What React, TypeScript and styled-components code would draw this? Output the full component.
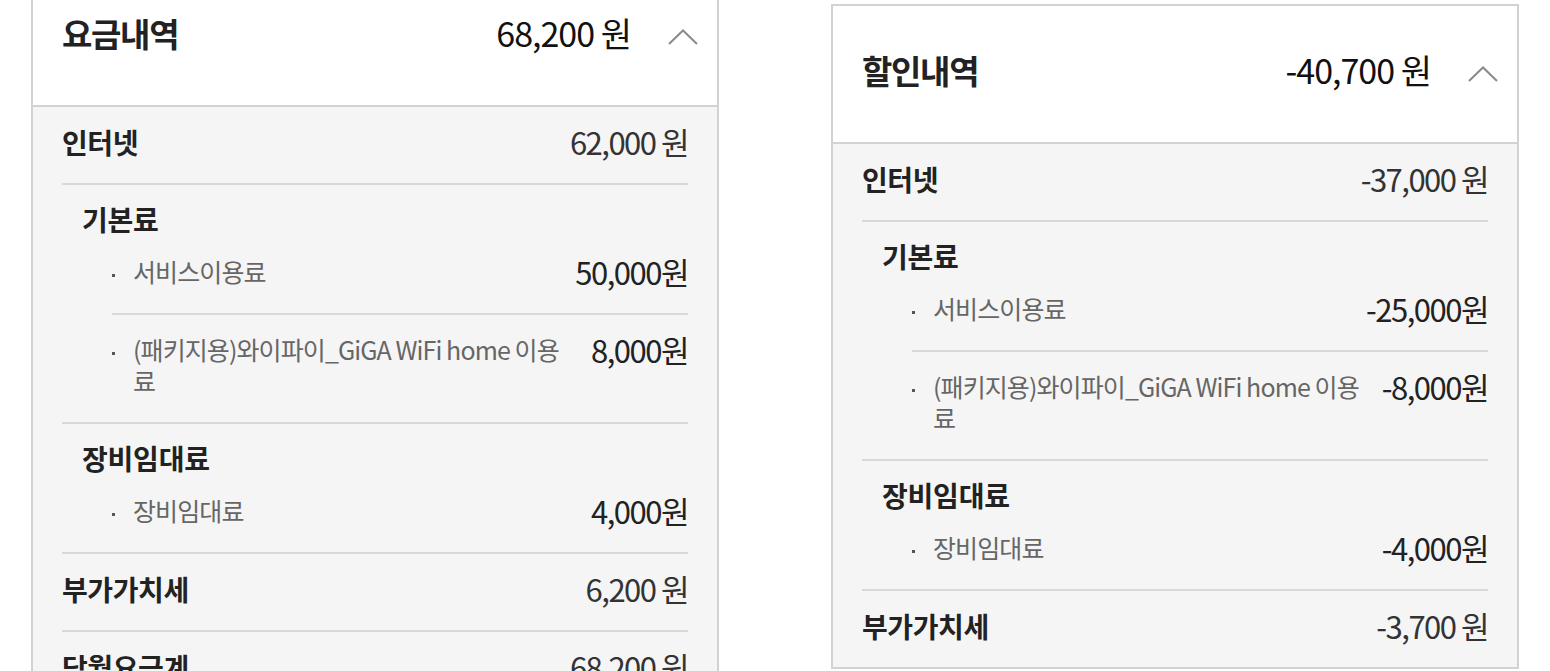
import styled, { createGlobalStyle } from 'styled-components'

let GlobalStyle = createGlobalStyle`
    html, body {
        margin: 0;
        background: #fff;
        font-family: "Noto Sans CJK KR", "Noto Sans", sans-serif;
    }
`

type Item = { label: string; amount: string }
type Entry =
    | { kind: 'row'; title: string; amount: string }
    | { kind: 'group'; title: string; items: Item[] }

type Bill = { title: string; total: string; offset: number; entries: Entry[] }

const bills: Bill[] = [
    {
        title: '요금내역',
        total: '68,200 원',
        offset: -33,
        entries: [
            { kind: 'row', title: '인터넷', amount: '62,000 원' },
            {
                kind: 'group', title: '기본료', items: [
                    { label: '서비스이용료', amount: '50,000원' },
                    { label: '(패키지용)와이파이_GiGA WiFi home 이용료', amount: '8,000원' },
                ]
            },
            { kind: 'group', title: '장비임대료', items: [{ label: '장비임대료', amount: '4,000원' }] },
            { kind: 'row', title: '부가가치세', amount: '6,200 원' },
            { kind: 'row', title: '당월요금계', amount: '68,200 원' },
        ],
    },
    {
        title: '할인내역',
        total: '-40,700 원',
        offset: 4,
        entries: [
            { kind: 'row', title: '인터넷', amount: '-37,000 원' },
            {
                kind: 'group', title: '기본료', items: [
                    { label: '서비스이용료', amount: '-25,000원' },
                    { label: '(패키지용)와이파이_GiGA WiFi home 이용료', amount: '-8,000원' },
                ]
            },
            { kind: 'group', title: '장비임대료', items: [{ label: '장비임대료', amount: '-4,000원' }] },
            { kind: 'row', title: '부가가치세', amount: '-3,700 원' },
        ],
    },
]

let Page = styled.div`
    display: flex;
    align-items: flex-start;
    gap: 112px;
    padding-left: 31px;
    height: 671px;
    overflow: hidden;
`
let Panel = styled.section<{ $offset: number }>`
    flex-shrink: 0;
    width: 688px;
    box-sizing: border-box;
    margin-top: ${p => p.$offset}px;
    border: 2px solid #d2d2d2;
    background: #f5f5f5;
`
let Header = styled.div`
    display: flex;
    align-items: flex-start;
    padding: 44px 19px 52px 29px;
    background: #fff;
    border-bottom: 2px solid #d2d2d2;
`
let HeaderTitle = styled.h2`
    flex: 1;
    margin: 0;
    font-size: 33px;
    font-weight: 700;
    line-height: 40px;
    letter-spacing: -1.3px;
    color: #222;
`
let HeaderAmount = styled.span`
    font-size: 34px;
    line-height: 40px;
    letter-spacing: -1px;
    color: #111;
`
let Toggle = styled.button`
    display: flex;
    margin: 16px 0 0 37px;
    padding: 0;
    border: 0;
    background: none;
`
let Body = styled.div`
    padding: 0 29px;
`
let Row = styled.div`
    display: flex;
    justify-content: space-between;
    align-items: center;
    padding: 17px 0 23px;
    border-bottom: 2px solid #d8d8d8;
    &:last-child {
        border-bottom: none;
    }
`
let RowTitle = styled.span`
    font-size: 28px;
    font-weight: 700;
    line-height: 36px;
    letter-spacing: -0.4px;
    color: #222;
`
let RowAmount = styled.span`
    font-size: 31px;
    line-height: 36px;
    letter-spacing: -1.5px;
    color: #333;
`
let Group = styled.div`
    border-bottom: 2px solid #d8d8d8;
    &:last-child {
        border-bottom: none;
    }
`
let GroupTitle = styled.div`
    padding: 16px 0 0 20px;
    font-size: 28px;
    font-weight: 700;
    line-height: 36px;
    letter-spacing: -0.2px;
    color: #222;
`
let ItemList = styled.ul`
    list-style: none;
    margin: 0 0 0 50px;
    padding: 0;
`
let ItemRow = styled.li`
    display: flex;
    justify-content: space-between;
    align-items: flex-start;
    padding: 19px 0 26px;
    border-bottom: 2px solid #d8d8d8;
    &:last-child {
        border-bottom: none;
    }
`
let ItemLabel = styled.div`
    display: flex;
    align-items: flex-start;
`
let Bullet = styled.i`
    flex-shrink: 0;
    width: 3px;
    height: 3px;
    margin: 18px 18px 0 0;
    background: #555;
`
let ItemText = styled.span`
    max-width: 440px;
    font-size: 25px;
    line-height: 31px;
    letter-spacing: -0.9px;
    color: #666;
`
let ItemAmount = styled.span`
    white-space: nowrap;
    font-size: 31px;
    line-height: 31px;
    letter-spacing: -1.5px;
    color: #222;
`

function Chevron() {
    return (
        <svg width="30" height="16" viewBox="0 0 30 16" fill="none">
            <path d="M1 15 L15 1.5 L29 15" stroke="#8a8a8a" strokeWidth="2" />
        </svg>
    )
}

function BillPanel({ bill }: { bill: Bill }) {
    return (
        <Panel $offset={bill.offset}>
            <Header>
                <HeaderTitle>{bill.title}</HeaderTitle>
                <HeaderAmount>{bill.total}</HeaderAmount>
                <Toggle aria-label="접기"><Chevron /></Toggle>
            </Header>
            <Body>
                {bill.entries.map((e, i) =>
                    e.kind === 'row' ? (
                        <Row key={i}>
                            <RowTitle>{e.title}</RowTitle>
                            <RowAmount>{e.amount}</RowAmount>
                        </Row>
                    ) : (
                        <Group key={i}>
                            <GroupTitle>{e.title}</GroupTitle>
                            <ItemList>
                                {e.items.map((it, j) => (
                                    <ItemRow key={j}>
                                        <ItemLabel>
                                            <Bullet />
                                            <ItemText>{it.label}</ItemText>
                                        </ItemLabel>
                                        <ItemAmount>{it.amount}</ItemAmount>
                                    </ItemRow>
                                ))}
                            </ItemList>
                        </Group>
                    )
                )}
            </Body>
        </Panel>
    )
}

export default function App() {
    return (
        <>
            <GlobalStyle />
            <Page>
                {bills.map((b, i) => <BillPanel key={i} bill={b} />)}
            </Page>
        </>
    )
}
